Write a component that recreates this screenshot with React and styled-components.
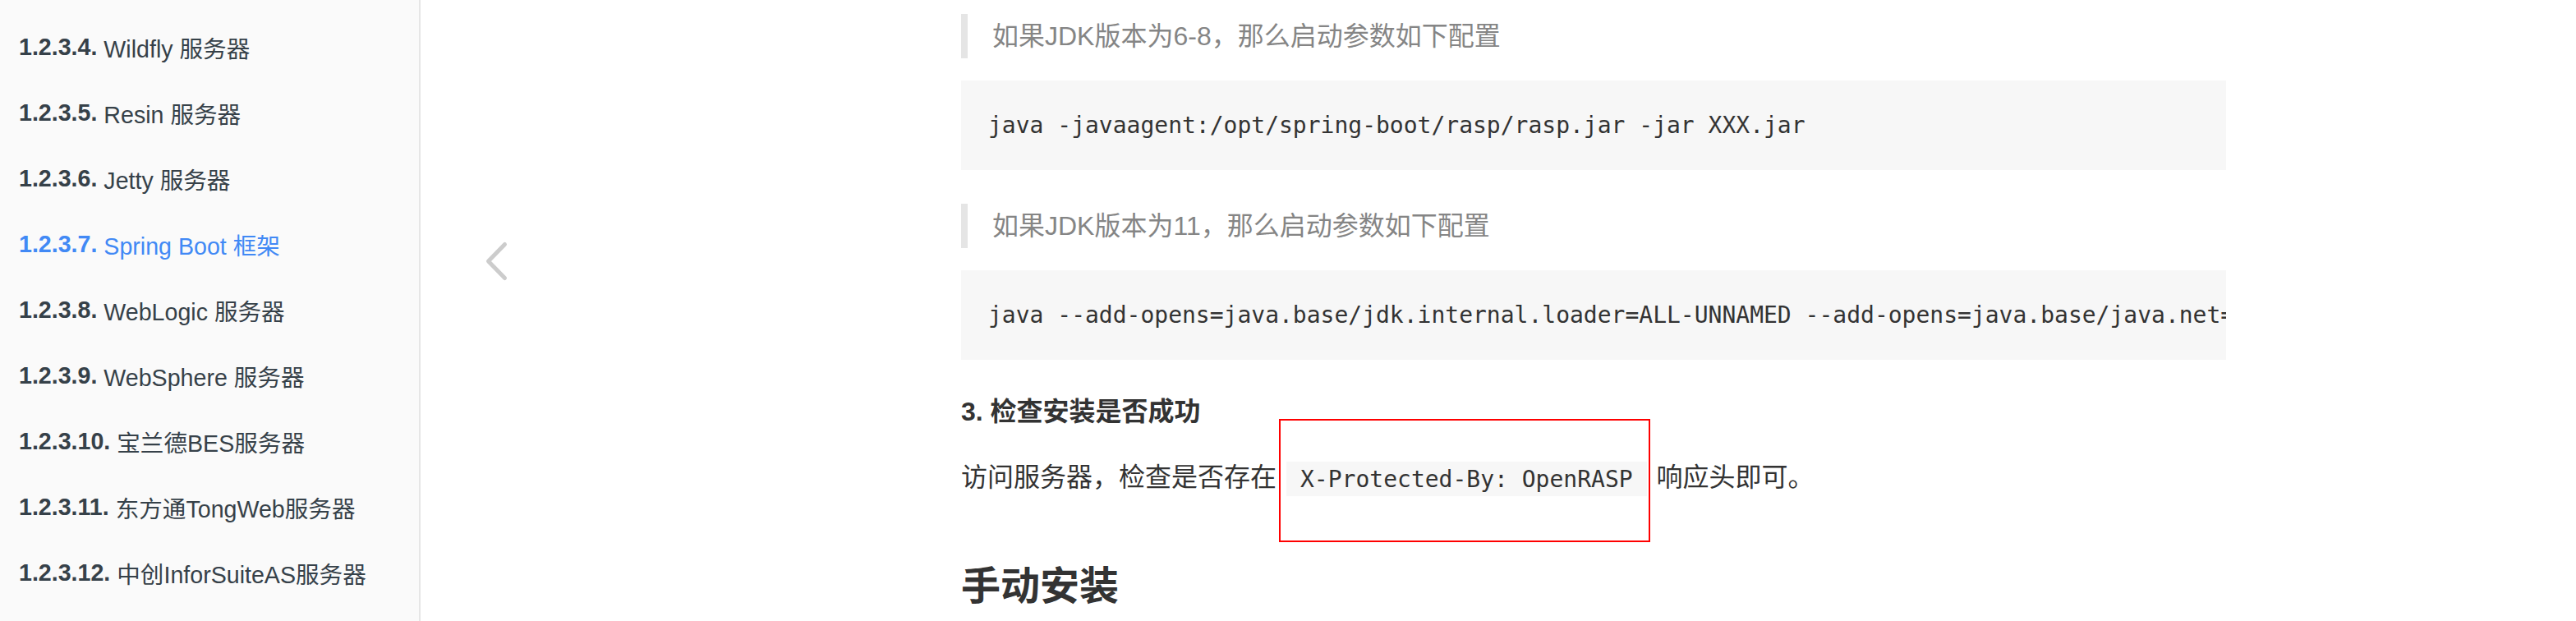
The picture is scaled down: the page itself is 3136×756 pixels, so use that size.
import React from 'react';
import styled, { createGlobalStyle } from 'styled-components';

const GlobalStyle = createGlobalStyle`
  html, body {
    margin: 0;
    padding: 0;
    background: #fff;
    overflow: hidden;
  }
`;

const SANS = `"Liberation Sans", "Noto Sans CJK SC", sans-serif`;
const MONO = `"DejaVu Sans Mono", "Liberation Mono", monospace`;

const Layout = styled.div`
  display: flex;
  height: 756px;
  overflow: hidden;
  font-family: ${SANS};
`;

const Sidebar = styled.nav`
  width: 510px;
  flex-shrink: 0;
  background: #fafafa;
  border-right: 2px solid #e6e6e6;
  padding-top: 17px;
`;

const NavList = styled.ul`
  list-style: none;
  margin: 0;
  padding: 0;
`;

const NavItem = styled.li`
  height: 80px;
  display: flex;
  align-items: center;
  padding-left: 23px;
  font-size: 28.6px;
  white-space: nowrap;
  color: ${({ $active }) => ($active ? '#4189f5' : '#364149')};
`;

const NavNum = styled.b`
  font-weight: 700;
`;

const Main = styled.div`
  flex: 1;
  display: flex;
`;

const PrevNav = styled.div`
  width: 658px;
  flex-shrink: 0;
  padding: 293px 0 0 78px;
  box-sizing: border-box;
`;

const Content = styled.section`
  width: 1540px;
  flex-shrink: 0;
  padding-top: 17px;
  color: #333;
  font-size: 32px;
`;

const Quote = styled.blockquote`
  margin: 0 0 27px;
  padding: 0 30px;
  border-left: 8px solid #e5e5e5;
  color: #858585;
  line-height: 54px;
`;

const Pre = styled.pre`
  margin: 0 0 41px;
  padding: 36px 0 35px 33px;
  background: #f7f7f7;
  font-family: ${MONO};
  font-size: 28px;
  line-height: 38px;
  color: #333;
  white-space: pre;
  overflow: hidden;
`;

const H3 = styled.h3`
  margin: 7px 0 30px;
  font-size: 32px;
  line-height: 45px;
  font-weight: 700;
  color: #333;
`;

const Para = styled.p`
  margin: 0;
  line-height: 54px;
  color: #333;
`;

const Marked = styled.span`
  position: relative;
  margin: 0 12px;
`;

const InlineCode = styled.code`
  padding: 4.5px 17px;
  background: #f7f7f7;
  font-family: ${MONO};
  font-size: 28px;
  color: #333;
`;

const Annotation = styled.span`
  position: absolute;
  left: -9px;
  right: -4px;
  top: -53px;
  bottom: -61px;
  border: 2px solid #f00;
  pointer-events: none;
`;

const H2 = styled.h2`
  margin: 70px 0 0;
  font-size: 48px;
  line-height: 67px;
  font-weight: 700;
  color: #333;
`;

const items = [
  ['1.2.3.4.', 'Wildfly 服务器'],
  ['1.2.3.5.', 'Resin 服务器'],
  ['1.2.3.6.', 'Jetty 服务器'],
  ['1.2.3.7.', 'Spring Boot 框架', true],
  ['1.2.3.8.', 'WebLogic 服务器'],
  ['1.2.3.9.', 'WebSphere 服务器'],
  ['1.2.3.10.', '宝兰德BES服务器'],
  ['1.2.3.11.', '东方通TongWeb服务器'],
  ['1.2.3.12.', '中创InforSuiteAS服务器'],
];

const ChevronLeft = () => (
  <svg width="30" height="50" viewBox="0 0 30 50">
    <polyline
      points="24.5,4.5 4.5,25 24.5,45.5"
      fill="none"
      stroke="#cccccc"
      strokeWidth="5"
      strokeLinecap="round"
      strokeLinejoin="round"
    />
  </svg>
);

export default function App() {
  return (
    <>
      <GlobalStyle />
      <Layout>
        <Sidebar>
          <NavList>
            {items.map(([num, label, active]) => (
              <NavItem key={num} $active={active}>
                <NavNum>{num}</NavNum>&nbsp;{label}
              </NavItem>
            ))}
          </NavList>
        </Sidebar>
        <Main>
          <PrevNav>
            <ChevronLeft />
          </PrevNav>
          <Content>
            <Quote>如果JDK版本为6-8，那么启动参数如下配置</Quote>
            <Pre>java -javaagent:/opt/spring-boot/rasp/rasp.jar -jar XXX.jar</Pre>
            <Quote>如果JDK版本为11，那么启动参数如下配置</Quote>
            <Pre>
              java --add-opens=java.base/jdk.internal.loader=ALL-UNNAMED --add-opens=java.base/java.net=ALL-UNNAMED -javaagent:/opt/spring-boot/rasp/rasp.jar -jar XXX.jar
            </Pre>
            <H3>3. 检查安装是否成功</H3>
            <Para>
              访问服务器，检查是否存在
              <Marked>
                <InlineCode>X-Protected-By: OpenRASP</InlineCode>
                <Annotation />
              </Marked>
              响应头即可。
            </Para>
            <H2>手动安装</H2>
          </Content>
        </Main>
      </Layout>
    </>
  );
}
